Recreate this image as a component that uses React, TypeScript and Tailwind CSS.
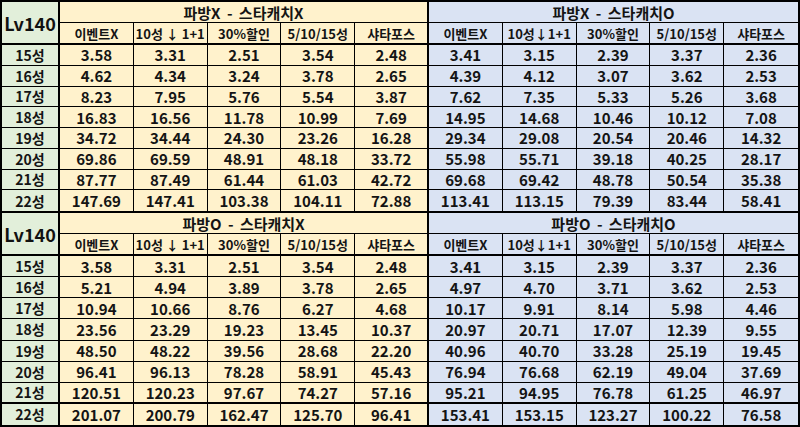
import React from "react";

type Tbl = {
  titles: [string, string];
  rows: string[][];
  thickLast?: boolean;
};

const labels = ["15성", "16성", "17성", "18성", "19성", "20성", "21성", "22성"];
const subL = ["이벤트X", "10성 ↓ 1+1", "30%할인", "5/10/15성", "샤타포스"];
const subR = ["이벤트X", "10성↓1+1", "30%할인", "5/10/15성", "샤타포스"];

const t1: Tbl = {
  titles: ["파방X - 스타캐치X", "파방X - 스타캐치O"],
  rows: [
    ["3.58", "3.31", "2.51", "3.54", "2.48", "3.41", "3.15", "2.39", "3.37", "2.36"],
    ["4.62", "4.34", "3.24", "3.78", "2.65", "4.39", "4.12", "3.07", "3.62", "2.53"],
    ["8.23", "7.95", "5.76", "5.54", "3.87", "7.62", "7.35", "5.33", "5.26", "3.68"],
    ["16.83", "16.56", "11.78", "10.99", "7.69", "14.95", "14.68", "10.46", "10.12", "7.08"],
    ["34.72", "34.44", "24.30", "23.26", "16.28", "29.34", "29.08", "20.54", "20.46", "14.32"],
    ["69.86", "69.59", "48.91", "48.18", "33.72", "55.98", "55.71", "39.18", "40.25", "28.17"],
    ["87.77", "87.49", "61.44", "61.03", "42.72", "69.68", "69.42", "48.78", "50.54", "35.38"],
    ["147.69", "147.41", "103.38", "104.11", "72.88", "113.41", "113.15", "79.39", "83.44", "58.41"],
  ],
};

const t2: Tbl = {
  titles: ["파방O - 스타캐치X", "파방O - 스타캐치O"],
  thickLast: true,
  rows: [
    ["3.58", "3.31", "2.51", "3.54", "2.48", "3.41", "3.15", "2.39", "3.37", "2.36"],
    ["5.21", "4.94", "3.89", "3.78", "2.65", "4.97", "4.70", "3.71", "3.62", "2.53"],
    ["10.94", "10.66", "8.76", "6.27", "4.68", "10.17", "9.91", "8.14", "5.98", "4.46"],
    ["23.56", "23.29", "19.23", "13.45", "10.37", "20.97", "20.71", "17.07", "12.39", "9.55"],
    ["48.50", "48.22", "39.56", "28.68", "22.20", "40.96", "40.70", "33.28", "25.19", "19.45"],
    ["96.41", "96.13", "78.28", "58.91", "45.43", "76.94", "76.68", "62.19", "49.04", "37.69"],
    ["120.51", "120.23", "97.67", "74.27", "57.16", "95.21", "94.95", "76.78", "61.25", "46.97"],
    ["201.07", "200.79", "162.47", "125.70", "96.41", "153.41", "153.15", "123.27", "100.22", "76.58"],
  ],
};

function Table({ t, top }: { t: Tbl; top: boolean }) {
  return (
    <div
      className={`grid grid-cols-[58px_repeat(10,1fr)] grid-rows-[21px_22px_repeat(8,1fr)] ${
        top ? "h-[211px] border-b-2 border-black" : "h-[212px]"
      }`}
    >
      <div className="row-span-2 bg-[#e2efda] border-r-2 border-b-2 border-black flex items-center justify-center text-[18px] text-[#111]">
        Lv140
      </div>
      <div className="col-span-5 bg-[#fff2cc] border-r-2 border-b border-black flex items-center justify-center text-[15px] pt-[1px] [word-spacing:3px]">
        {t.titles[0]}
      </div>
      <div className="col-span-5 bg-[#dae3f3] border-b border-black flex items-center justify-center text-[15px] pt-[1px] [word-spacing:3px]">
        {t.titles[1]}
      </div>
      {subL.map((s, i) => (
        <div
          key={"l" + i}
          className={`bg-[#fff2cc] border-b-2 border-black flex items-center justify-center text-[13px] ${
            i === 4 ? "border-r-2" : "border-r"
          }`}
        >
          {s}
        </div>
      ))}
      {subR.map((s, i) => (
        <div
          key={"r" + i}
          className={`bg-[#dae3f3] border-b-2 border-black flex items-center justify-center text-[13px] ${
            i === 4 ? "" : "border-r"
          }`}
        >
          {s}
        </div>
      ))}
      {t.rows.map((r, ri) => {
        const last = ri === t.rows.length - 1;
        const bb = last ? "" : t.thickLast && ri === 6 ? "border-b-2" : "border-b";
        return (
          <React.Fragment key={ri}>
            <div
              className={`bg-[#e2efda] border-r-2 border-black ${bb} flex items-center justify-center text-[14px]`}
            >
              {labels[ri]}
            </div>
            {r.map((v, ci) => (
              <div
                key={ci}
                className={`${ci < 5 ? "bg-[#fff2cc]" : "bg-[#dae3f3]"} ${bb} border-black ${
                  ci === 4 ? "border-r-2" : ci === 9 ? "" : "border-r"
                } flex items-center justify-center text-[15px]`}
              >
                {v}
              </div>
            ))}
          </React.Fragment>
        );
      })}
    </div>
  );
}

export default function App() {
  return (
    <div
      className="w-[800px] h-[427px] border-2 border-black bg-white font-bold text-[#141414] leading-none overflow-hidden"
      style={{ fontFamily: '"Noto Sans CJK KR", "Noto Sans", sans-serif' }}
    >
      <Table t={t1} top={true} />
      <Table t={t2} top={false} />
    </div>
  );
}
